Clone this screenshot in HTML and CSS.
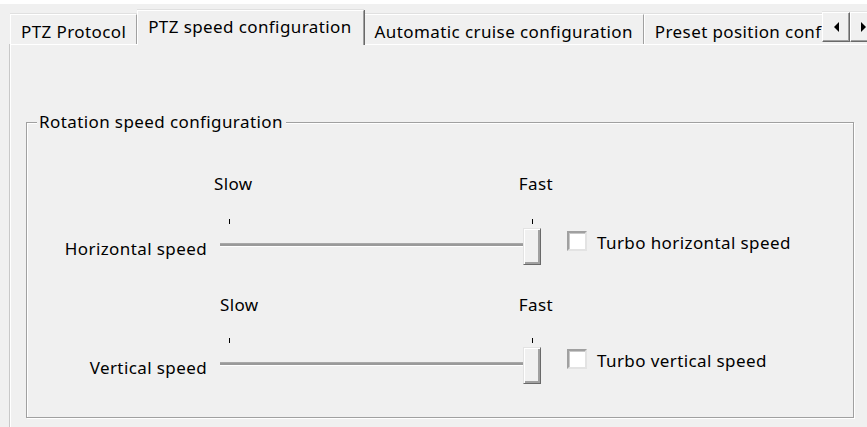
FILE: index.html
```html
<!DOCTYPE html>
<html lang="en">
<head>
<meta charset="UTF-8" />
<title>PTZ speed configuration</title>
<link rel="stylesheet" href="styles.css">
</head>
<body>

<div class="topline"></div>

<div class="tabstrip">
  <div class="tabs">
    <div class="tab">PTZ Protocol</div>
    <div class="tab active">PTZ speed configuration</div>
    <div class="tab">Automatic cruise configuration</div>
    <div class="tab">Preset position configuration</div>
  </div>
  <div class="scroll">
    <button class="arrow"><svg width="6" height="10" viewBox="0 0 6 10"><polygon points="6,0 6,10 1,5" fill="#000"/></svg></button>
    <button class="arrow"><svg width="6" height="10" viewBox="0 0 6 10"><polygon points="0,0 0,10 5,5" fill="#000"/></svg></button>
  </div>
</div>

<div class="panel">
  <div class="group">
    <div class="group-title">Rotation speed configuration</div>

    <div class="speed-row first">
      <span class="name">Horizontal speed</span>
      <div class="slider">
        <div class="scale"><span>Slow</span><span>Fast</span></div>
        <div class="ticks"><i></i><i></i></div>
        <div class="track"><div class="groove"></div><div class="thumb"></div></div>
      </div>
      <label class="turbo"><span class="box"></span><span class="text">Turbo horizontal speed</span></label>
    </div>

    <div class="speed-row second">
      <span class="name">Vertical speed</span>
      <div class="slider">
        <div class="scale shift"><span>Slow</span><span>Fast</span></div>
        <div class="ticks"><i></i><i></i></div>
        <div class="track"><div class="groove"></div><div class="thumb"></div></div>
      </div>
      <label class="turbo"><span class="box"></span><span class="text">Turbo vertical speed</span></label>
    </div>
  </div>
</div>

</body>
</html>
```

FILE: styles.css
```css
html, body { margin: 0; height: 100%; overflow: hidden; }
body { background: #f0f0f0; color: #000; font-family: "Noto Sans", "Open Sans", sans-serif; font-size: 17px; letter-spacing: 0.4px; line-height: 20px; }

.topline { height: 4px; background: #fff; }

/* tab strip */
.tabstrip { display: flex; align-items: flex-end; height: 40px; width: 900px; padding-left: 10px; position: relative; z-index: 2; }
.tabs { display: flex; align-items: flex-end; width: 812px; overflow: hidden; height: 41px; margin-bottom: -1px; }
.tab { flex: none; box-sizing: border-box; height: 30px; margin-bottom: 1px; padding: 7px 10px 0 10px; white-space: nowrap;
       border-top: 1px solid #fff; border-left: 1px solid #fff; border-right: 1px solid #a0a0a0;
       box-shadow: 0 -1px 0 #e0e0e0, 1px 0 0 #696969; }
.tab.active { height: 35px; margin-bottom: 0; padding: 6px 11px 0 10px; background: #f0f0f0; position: relative; z-index: 1; }

.scroll { display: flex; margin-bottom: 2px; }
.arrow { box-sizing: border-box; width: 28px; height: 30px; padding: 0; margin: 0; background: #f0f0f0; display: flex; align-items: center; justify-content: center;
         border: 1px solid; border-color: #fff #696969 #696969 #fff; box-shadow: inset -1px -1px 0 #a0a0a0, 0 -1px 0 #e3e3e3; }

/* panel under the tabs */
.panel { margin-left: 10px; width: 900px; height: 400px; border-top: 1px solid #fff; border-left: 1px solid #fff; box-shadow: -1px 0 0 #c8c8c8; }

.group { box-sizing: border-box; width: 828px; height: 296px; margin: 77px 0 0 15px;
         border: 1px solid #a0a0a0; box-shadow: inset 1px 1px 0 #fff, 1px 1px 0 #fff; }
.group-title { display: table; margin: -11px 0 0 10px; padding: 0 3px 0 2px; background: #f0f0f0; }

.speed-row { display: flex; align-items: flex-end; }
.speed-row.first { margin-top: 42px; }
.speed-row.second { margin-top: 30px; }

.name { width: 180px; height: 37px; line-height: 37px; padding-top: 2px; box-sizing: border-box; text-align: right; }

.slider { width: 341px; margin-left: 5px; }
.scale { display: flex; justify-content: space-between; padding-left: 2px; }
.scale.shift { padding-left: 8px; }
.ticks { display: flex; justify-content: space-between; height: 5px; margin-top: 25px; padding: 0 20px 0 17px; }
.ticks i { width: 1px; height: 5px; background: #000; }
.speed-row.second .ticks { margin-top: 23px; }
.track { display: flex; align-items: center; height: 37px; margin-top: 4px; padding-left: 8px; }
.groove { width: 303px; height: 2px; margin-top: -3px; background: #9a9a9a; border-top: 1px solid #a8a8a8; border-bottom: 1px solid #fff; }
.thumb { box-sizing: border-box; width: 18px; height: 37px; background: #f0f0f0;
         border: 1px solid; border-color: #e3e3e3 #696969 #696969 #e3e3e3;
         box-shadow: inset 1px 1px 0 #fff, inset -2px -2px 0 #a0a0a0; }

.turbo { display: flex; align-items: flex-start; height: 37px; margin-left: 14px; padding-top: 3px; box-sizing: border-box; }
.speed-row.second .turbo { padding-top: 2px; }
.box { box-sizing: border-box; width: 20px; height: 20px; background: #fff;
       border: 2px solid; border-color: #a0a0a0 #e3e3e3 #e3e3e3 #a0a0a0; box-shadow: inset 1px 1px 0 #c8c8c8; }
.text { margin: 2px 0 0 10px; }
```
